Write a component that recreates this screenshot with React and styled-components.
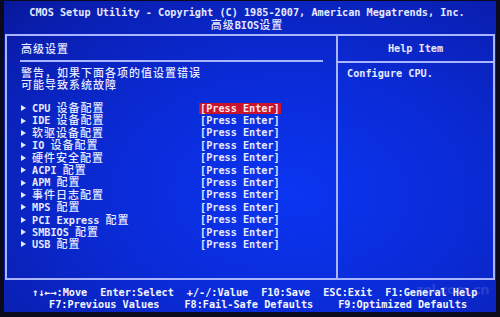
import React from 'react';
import styled, { createGlobalStyle } from 'styled-components';

const GlobalStyle = createGlobalStyle`
  html, body {
    margin: 0;
    padding: 0;
    background: #0a0a1c;
    overflow: hidden;
  }
`;

const Screen = styled.div`
  position: relative;
  width: 492px;
  height: 311px;
  margin: 1px 4px 0 4px;
  padding-top: 5px;
  box-sizing: border-box;
  background: radial-gradient(ellipse at 58% 62%, #0b35f2 0%, #0a2bd6 45%, #0a1fb0 85%, #08189a 100%);
  color: #e6e9ff;
  font-family: "DejaVu Sans Mono", "Liberation Mono", monospace;
  font-size: 10.2px;
  font-weight: bold;
  display: flex;
  flex-direction: column;
`;

const Han = styled.span`
  display: inline-block;
  height: 11px;
  line-height: 11px;
  font-family: "Noto Sans CJK SC", "Noto Sans", sans-serif;
  font-size: 11px;
  font-weight: 500;
  letter-spacing: 1px;
`;

const Title = styled.div`
  text-align: center;
  height: 13px;
  line-height: 13px;
  padding-right: 6px;
  white-space: pre;
`;

const Box = styled.div`
  margin: 2px 0 0 1px;
  width: 490px;
  height: 246px;
  box-sizing: border-box;
  border: 2px solid #a9b6ff;
  display: grid;
  grid-template-columns: 329px 2px 1fr;
`;

const Divider = styled.div`
  background: #a9b6ff;
`;

const Panel = styled.div`
  display: flex;
  flex-direction: column;
`;

const PanelHead = styled.div`
  height: ${p => p.$h}px;
  display: flex;
  align-items: center;
  justify-content: ${p => (p.$center ? 'center' : 'flex-start')};
  padding-left: ${p => (p.$center ? 0 : 14)}px;
`;

const Rule = styled.div`
  height: 2px;
  background: #a9b6ff;
  margin: 0 ${p => p.$inset}px;
`;

const Warning = styled.div`
  margin-top: 5px;
  padding-left: 14px;
`;

const Line = styled.div`
  height: 12px;
  line-height: 12px;
`;

const Menu = styled.div`
  margin-top: 11px;
  display: flex;
  flex-direction: column;
`;

const Item = styled.div`
  display: grid;
  grid-template-columns: 11px 167px auto;
  align-items: center;
  padding-left: 14px;
  height: 12.4px;
  line-height: 12.4px;
  white-space: pre;
`;

const Arrow = styled.span`
  width: 0;
  height: 0;
  border-top: 3px solid transparent;
  border-bottom: 3px solid transparent;
  border-left: 5px solid #e6e9ff;
`;

const Label = styled.span`
  height: 12.4px;
`;

const Value = styled.span`
  justify-self: start;
  padding: 0 1px;
  line-height: 11px;
  background: ${p => (p.$active ? '#c8142c' : 'transparent')};
  color: ${p => (p.$active ? '#ffe4ea' : '#e6e9ff')};
`;

const HelpText = styled.div`
  margin-top: 5px;
  padding-left: 9px;
  line-height: 12px;
`;

const Footer = styled.div`
  margin-top: 7px;
  display: flex;
  flex-direction: column;
  color: #f4f5ff;
`;

const KeyRow = styled.div`
  display: flex;
  gap: ${p => p.$gap}px;
  padding-left: ${p => p.$left}px;
  line-height: 12px;
  white-space: pre;
`;

const Watermark = styled.div`
  position: absolute;
  left: 412px;
  top: 281px;
  font-family: "DejaVu Sans", sans-serif;
  font-size: 13px;
  font-weight: bold;
  color: rgba(200, 205, 235, 0.18);
  letter-spacing: -0.5px;
  pointer-events: none;
`;

const CJK = /([\u3000-\u9fff\uff00-\uffef]+)/;

function T({ children }) {
  return String(children)
    .split(CJK)
    .map((part, i) => (CJK.test(part) ? <Han key={i}>{part}</Han> : part));
}

const items = [
  'CPU 设备配置',
  'IDE 设备配置',
  '软驱设备配置',
  'IO 设备配置',
  '硬件安全配置',
  'ACPI 配置',
  'APM 配置',
  '事件日志配置',
  'MPS 配置',
  'PCI Express 配置',
  'SMBIOS 配置',
  'USB 配置',
];

const keys1 = ['↑↓←→:Move', 'Enter:Select', '+/-/:Value', 'F10:Save', 'ESC:Exit', 'F1:General Help'];
const keys2 = ['F7:Previous Values', 'F8:Fail-Safe Defaults', 'F9:Optimized Defaults'];

export default function App() {
  return (
    <>
      <GlobalStyle />
      <Screen>
        <Title>CMOS Setup Utility - Copyright (C) 1985-2007, American Megatrends, Inc.</Title>
        <Title><T>高级BIOS设置</T></Title>
        <Box>
          <Panel>
            <PanelHead $h={24}><T>高级设置</T></PanelHead>
            <Rule $inset={13} />
            <Warning>
              <Line><T>警告，如果下面各项的值设置错误</T></Line>
              <Line><T>可能导致系统故障</T></Line>
            </Warning>
            <Menu>
              {items.map((label, i) => (
                <Item key={label}>
                  <Arrow />
                  <Label><T>{label}</T></Label>
                  <Value $active={i === 0}>[Press Enter]</Value>
                </Item>
              ))}
            </Menu>
          </Panel>
          <Divider />
          <Panel>
            <PanelHead $h={25} $center>Help Item</PanelHead>
            <Rule $inset={0} />
            <HelpText>Configure CPU.</HelpText>
          </Panel>
        </Box>
        <Footer>
          <KeyRow $gap={13} $left={28}>
            {keys1.map(k => <span key={k}>{k}</span>)}
          </KeyRow>
          <KeyRow $gap={25} $left={45}>
            {keys2.map(k => <span key={k}>{k}</span>)}
          </KeyRow>
        </Footer>
        <Watermark>zol.com.cn</Watermark>
      </Screen>
    </>
  );
}
